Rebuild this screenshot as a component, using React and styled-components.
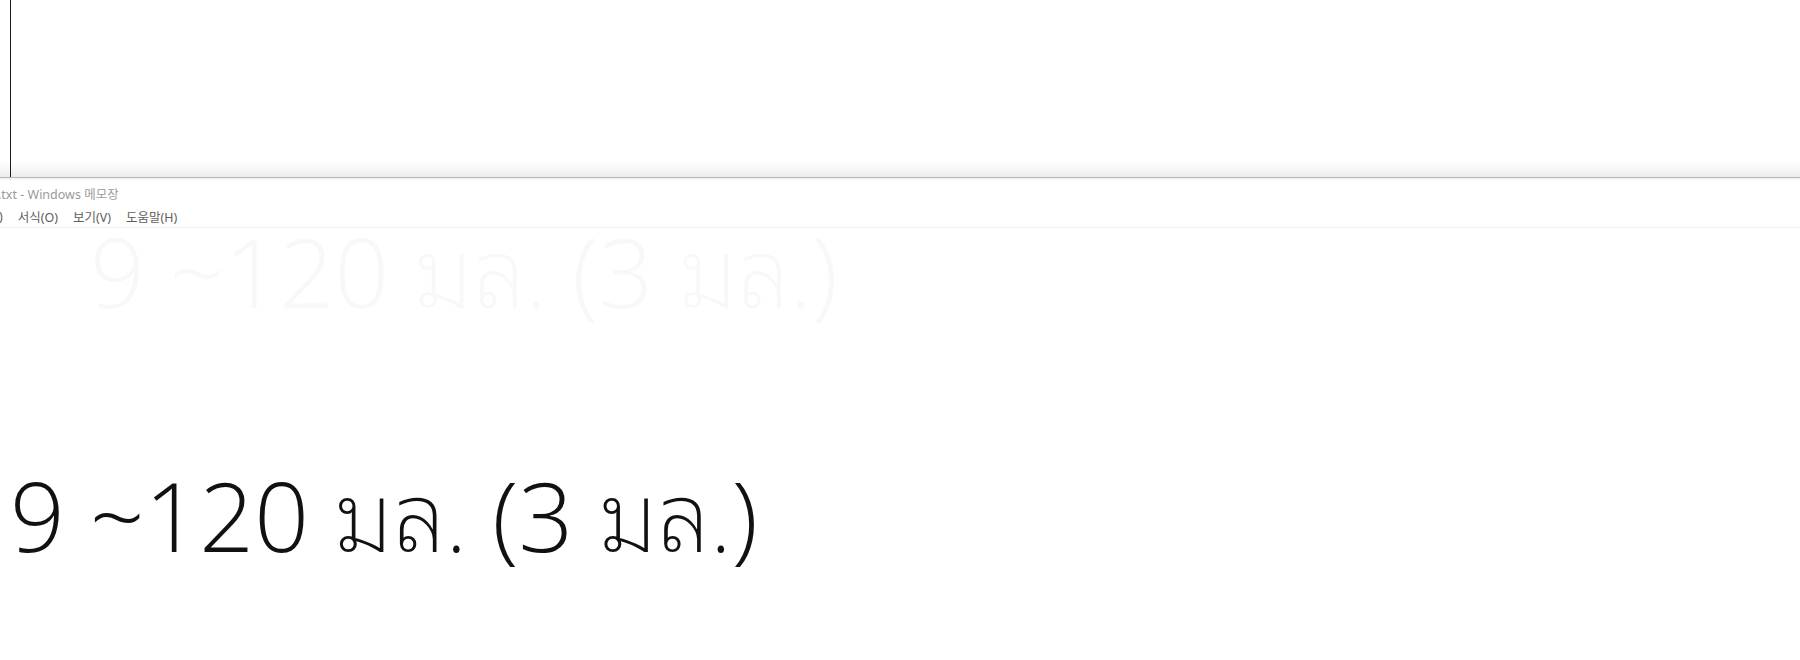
import styled, { createGlobalStyle } from "styled-components";

const GlobalStyle = createGlobalStyle`
  html, body {
    margin: 0;
    padding: 0;
    background: #ffffff;
    overflow: hidden;
  }
`;

const Screen = styled.div`
  width: 1800px;
  height: 660px;
  display: flex;
  flex-direction: column;
  background: #ffffff;
`;

const BackPane = styled.div`
  height: 177px;
  display: flex;
  background: linear-gradient(to bottom, #ffffff 0, #ffffff 162px, #ececec 177px);
  border-bottom: 1px solid #b6b6b6;
`;

const Caret = styled.div`
  width: 1px;
  margin-left: 10px;
  background: #1a1a1a;
`;

const Notepad = styled.div`
  flex: 1;
  display: flex;
  flex-direction: column;
  border-top: 2px solid #f4f4f4;
`;

const TitleBar = styled.div`
  height: 25px;
  display: flex;
  align-items: center;
  padding-top: 1px;
  font-family: "Noto Sans", "Noto Sans CJK KR", sans-serif;
  font-size: 12.5px;
  color: #9b9b9b;
  text-indent: -2px;
  white-space: nowrap;
`;

const MenuBar = styled.div`
  height: 21px;
  display: flex;
  align-items: center;
  gap: 15px;
  margin-left: -1px;
  border-bottom: 1px solid #efefef;
  font-family: "Noto Sans", "Noto Sans CJK KR", sans-serif;
  font-size: 12.5px;
  color: #5e5e5e;
  white-space: nowrap;
`;

const MenuItem = styled.span``;

const Editor = styled.div`
  flex: 1;
  display: flex;
  flex-direction: column;
  font-family: "Open Sans", "Noto Sans Thai Looped", "Noto Sans Thai", sans-serif;
  font-weight: 300;
  font-size: 96px;
  line-height: 1;
  white-space: nowrap;
`;

const Line = styled.div`
  color: ${(p) => (p.$ghost ? "#f8f8f8" : "#111111")};
  margin-left: ${(p) => p.$indent}px;
  margin-top: ${(p) => p.$top}px;
`;

const Thai = styled.span`
  font-family: "Noto Sans Thai Looped", "Noto Sans Thai", sans-serif;
  font-weight: 250;
`;

function Measure() {
  return (
    <>
      9 ~120 <Thai>มล.</Thai> (3 <Thai>มล.</Thai>)
    </>
  );
}

export default function App() {
  return (
    <>
      <GlobalStyle />
      <Screen>
        <BackPane>
          <Caret />
        </BackPane>
        <Notepad>
          <TitleBar>.txt - Windows 메모장</TitleBar>
          <MenuBar>
            <MenuItem>)</MenuItem>
            <MenuItem>서식(O)</MenuItem>
            <MenuItem>보기(V)</MenuItem>
            <MenuItem>도움말(H)</MenuItem>
          </MenuBar>
          <Editor>
            <Line $ghost $indent={90} $top={-11}><Measure /></Line>
            <Line $indent={10} $top={142}><Measure /></Line>
          </Editor>
        </Notepad>
      </Screen>
    </>
  );
}
